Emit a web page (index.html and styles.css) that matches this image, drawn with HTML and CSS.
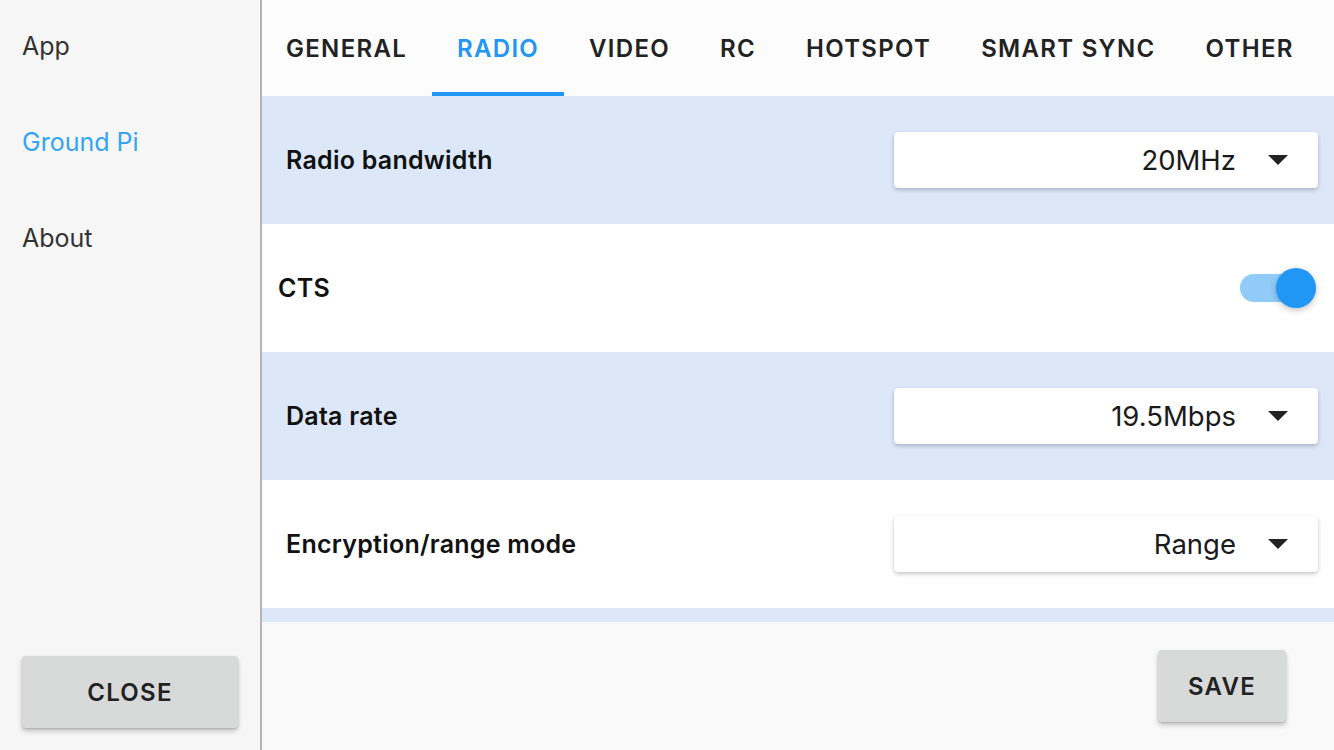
FILE: index.html
```html
<!DOCTYPE html>
<html>
<head>
<meta charset="utf-8">
<link rel="stylesheet" href="styles.css">
</head>
<body>
<div class="app">
  <aside class="sidebar">
    <nav class="side-nav">
      <div class="side-item">App</div>
      <div class="side-item active">Ground Pi</div>
      <div class="side-item">About</div>
    </nav>
    <button class="btn btn-close">CLOSE</button>
  </aside>
  <main class="main">
    <div class="tabs">
      <div class="tab">GENERAL</div>
      <div class="tab active">RADIO</div>
      <div class="tab">VIDEO</div>
      <div class="tab">RC</div>
      <div class="tab">HOTSPOT</div>
      <div class="tab">SMART SYNC</div>
      <div class="tab">OTHER</div>
    </div>
    <div class="list">
      <div class="row tinted">
        <div class="label">Radio bandwidth</div>
        <div class="select"><span class="value">20MHz</span><span class="caret"></span></div>
      </div>
      <div class="row row-narrow">
        <div class="label">CTS</div>
        <div class="switch"><span class="track"></span><span class="knob"></span></div>
      </div>
      <div class="row tinted">
        <div class="label">Data rate</div>
        <div class="select"><span class="value">19.5Mbps</span><span class="caret"></span></div>
      </div>
      <div class="row">
        <div class="label">Encryption/range mode</div>
        <div class="select"><span class="value">Range</span><span class="caret"></span></div>
      </div>
      <div class="row tinted"></div>
    </div>
    <div class="footer">
      <button class="btn btn-save">SAVE</button>
    </div>
  </main>
</div>
</body>
</html>
```
FILE: styles.css
```css
* { box-sizing: border-box; }
html, body {
  margin: 0;
  padding: 0;
  width: 1334px;
  height: 750px;
  overflow: hidden;
  font-family: Inter, "Noto Sans", sans-serif;
}
.app {
  display: grid;
  grid-template-columns: 260px 1fr;
  grid-template-rows: 750px;
  height: 750px;
}
.sidebar {
  background: #f6f6f6;
  border-right: 2px solid #b4b4b4;
  width: 262px;
  min-height: 0;
  display: flex;
  flex-direction: column;
  justify-content: space-between;
  padding: 0 22px 22px 22px;
}
.side-nav {
  display: flex;
  flex-direction: column;
  margin-top: -2px;
}
.side-item {
  height: 96px;
  line-height: 96px;
  font-size: 25px;
  color: #333333;
}
.side-item.active { color: #33a4f4; }
.btn {
  border: none;
  background: #d8d9d9;
  border-radius: 4px;
  box-shadow: 0 3px 5px rgba(0,0,0,0.22), 0 1px 2px rgba(0,0,0,0.12);
  font-family: Inter, "Noto Sans", sans-serif;
  font-size: 24px;
  font-weight: 600;
  letter-spacing: 1.3px;
  color: #222;
  height: 72px;
  padding: 0;
}
.btn-close { width: 216px; }
.btn-save { width: 128px; }
.main {
  margin-left: 2px;
  display: flex;
  flex-direction: column;
  min-width: 0;
  min-height: 0;
  height: 750px;
}
.tabs {
  height: 96px;
  background: #fcfcfc;
  display: flex;
  align-items: stretch;
  flex: none;
}
.tab {
  padding: 4px 25px 0 25px;
  display: flex;
  align-items: center;
  font-size: 24px;
  font-weight: 600;
  letter-spacing: 1.3px;
  color: #222;
  border-bottom: 4px solid transparent;
}
.tab:first-child { padding-left: 24px; }
.tab.active {
  color: #2196f3;
  border-bottom-color: #2196f3;
}
.list {
  flex: 1 1 auto;
  min-height: 0;
  overflow: hidden;
  display: flex;
  flex-direction: column;
}
.row {
  flex: none;
  height: 128px;
  background: #ffffff;
  display: flex;
  align-items: center;
  justify-content: space-between;
  padding: 0 16px 0 24px;
}
.row.tinted { background: #dce8f8; }
.row-narrow { padding-left: 16px; padding-right: 18px; }
.label {
  font-size: 25px;
  font-weight: 600;
  letter-spacing: 0.25px;
  color: #111;
}
.select {
  width: 424px;
  height: 56px;
  background: #fff;
  border-radius: 4px;
  box-shadow: 0 2px 4px rgba(0,0,0,0.22), 0 0 1px rgba(0,0,0,0.1);
  display: flex;
  align-items: center;
  justify-content: flex-end;
  padding-right: 30px;
}
.value {
  font-size: 27.5px;
  color: #1a1a1a;
  margin-right: 32px;
}
.caret {
  width: 0;
  height: 0;
  border-left: 10px solid transparent;
  border-right: 10px solid transparent;
  border-top: 10px solid #222;
}
.switch {
  position: relative;
  width: 76px;
  height: 40px;
}
.track {
  position: absolute;
  left: 0;
  top: 6px;
  width: 56px;
  height: 28px;
  border-radius: 14px;
  background: #90cbf9;
}
.knob {
  position: absolute;
  right: 0;
  top: 0;
  width: 40px;
  height: 40px;
  border-radius: 50%;
  background: #2196f3;
  box-shadow: 0 2px 6px rgba(0,0,0,0.25);
}
.footer {
  flex: none;
  height: 128px;
  background: #f9f9f9;
  display: flex;
  align-items: center;
  justify-content: flex-end;
  padding-right: 48px;
}
```
